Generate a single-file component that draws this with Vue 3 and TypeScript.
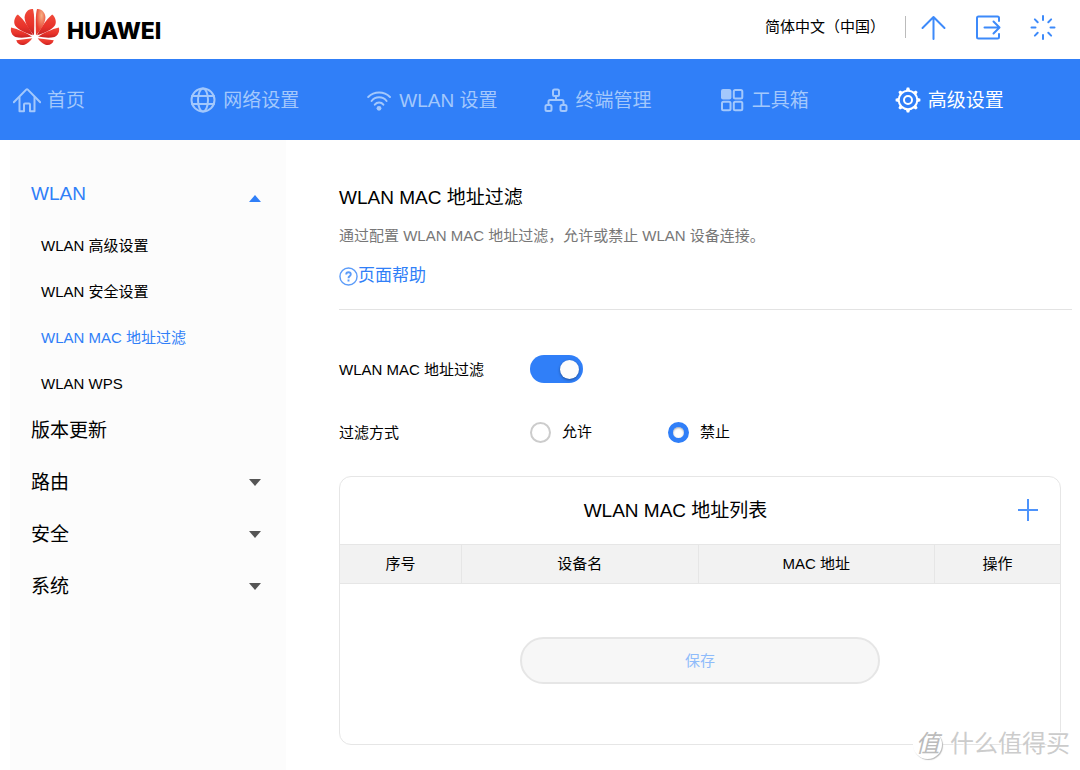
<script setup lang="ts">
import { ref } from 'vue'

type IconName = 'home' | 'globe' | 'wifi' | 'devices' | 'tools' | 'gear'

const tabs: { label: string; icon: IconName }[] = [
  { label: '首页', icon: 'home' },
  { label: '网络设置', icon: 'globe' },
  { label: 'WLAN 设置', icon: 'wifi' },
  { label: '终端管理', icon: 'devices' },
  { label: '工具箱', icon: 'tools' },
  { label: '高级设置', icon: 'gear' },
]
const activeTab = ref('高级设置')

const wlanPages = ['WLAN 高级设置', 'WLAN 安全设置', 'WLAN MAC 地址过滤', 'WLAN WPS']
const activePage = ref('WLAN MAC 地址过滤')
const wlanOpen = ref(true)
const sections = [
  { label: '版本更新', expandable: false },
  { label: '路由', expandable: true },
  { label: '安全', expandable: true },
  { label: '系统', expandable: true },
]

const filterOn = ref(true)
const mode = ref('deny')
const teeth = [0, 45, 90, 135, 180, 225, 270, 315]
</script>

<template>
  <div class="page">
    <header class="top">
      <a class="brand" href="#">
        <svg class="mark" viewBox="30 23 148 113" aria-hidden="true">
          <defs>
            <linearGradient id="petal" x1="0" y1="0" x2="0" y2="1">
              <stop offset="0" stop-color="#f04a3a" />
              <stop offset="0.6" stop-color="#e8322a" />
              <stop offset="1" stop-color="#c42222" />
            </linearGradient>
            <radialGradient id="glow" cx="0.4" cy="0.25" r="0.6">
              <stop offset="0" stop-color="#f6b184" />
              <stop offset="1" stop-color="#e93a2e" />
            </radialGradient>
            <g id="side">
              <path d="M98 104C88 84 72 58 53 42C43 50 39 64 45 75C53 88 78 98 98 104Z" />
              <path d="M95 108C78 97 54 86 33 81C30 92 35 104 46 109C60 113 78 111 95 108Z" />
              <path d="M96 113L48 119C52 130 62 136 73 132C83 128 90 122 96 113Z" />
            </g>
            <path id="centre" d="M101 104C102 76 103 44 98 26C84 24 73 37 73 52C74 70 88 90 101 104Z" />
          </defs>
          <g fill="url(#petal)">
            <use href="#side" />
            <use href="#centre" />
            <use href="#side" transform="translate(208) scale(-1 1)" />
          </g>
          <use href="#centre" fill="url(#glow)" transform="translate(208) scale(-1 1)" />
        </svg>
        <span class="wordmark">HUAWEI</span>
      </a>
      <div class="tools">
        <button class="lang" type="button">简体中文（中国）</button>
        <span class="bar"></span>
        <button class="tool" type="button" aria-label="更新">
          <svg viewBox="0 0 26 26"><path d="M13.5 25V3M2.5 14L13.5 3L24.5 14" /></svg>
        </button>
        <button class="tool" type="button" aria-label="退出">
          <svg viewBox="0 0 26 26"><path d="M24 7V4Q24 2.500 22.500 2.500H3.500Q2 2.500 2 4V23Q2 24.500 3.500 24.500H22.500Q24 24.500 24 23V20M9.500 13.500H24M18.500 7.500L24.500 13.500L18.500 19.500" /></svg>
        </button>
        <button class="tool" type="button" aria-label="状态">
          <svg viewBox="0 0 26 26">
            <path v-for="a in teeth" :key="a" d="M13 2V6" :transform="`rotate(${a} 13 13.500)`" />
          </svg>
        </button>
      </div>
    </header>

    <nav class="tabs">
      <a v-for="t in tabs" :key="t.label" href="#" class="tab" :class="{ active: t.label === activeTab }"
        @click.prevent="activeTab = t.label">
        <svg class="tab-icon" viewBox="0 0 28 28" aria-hidden="true">
          <g v-if="t.icon === 'home'">
            <path d="M0.800 16.200L13.200 3.600Q14 2.800 14.800 3.600L27.200 16.200" />
            <path d="M6.500 11.500V25.200H11V18.500Q11 17.500 12 17.500H16Q17 17.500 17 18.500V25.200H21.500V11.500" />
          </g>
          <g v-else-if="t.icon === 'globe'">
            <circle cx="14" cy="14" r="11.500" />
            <ellipse cx="14" cy="14" rx="5" ry="11.500" />
            <path d="M3 10H25M3 18H25" />
          </g>
          <g v-else-if="t.icon === 'wifi'">
            <path d="M3.200 11A15.500 15.500 0 0 1 25 11M6.600 15A9.500 9.500 0 0 1 21.600 15M9.800 18.600A5.500 5.500 0 0 1 18.400 18.600" />
            <circle class="solid" cx="14" cy="22.300" r="2.400" />
          </g>
          <g v-else-if="t.icon === 'devices'">
            <rect x="11" y="3.500" width="6" height="6.500" rx="1.500" />
            <rect x="3.500" y="19" width="6" height="6" rx="1.500" />
            <rect x="18.500" y="19" width="6" height="6" rx="1.500" />
            <path d="M14 10V14M6.500 19V15.500Q6.500 14 8 14H20Q21.500 14 21.500 15.500V19" />
          </g>
          <g v-else-if="t.icon === 'tools'">
            <rect class="solid" x="3" y="3" width="10.400" height="10.400" rx="2" />
            <rect x="15.800" y="4" width="8.500" height="8.500" rx="1.500" />
            <rect x="4" y="15.800" width="8.500" height="8.500" rx="1.500" />
            <rect x="15.800" y="15.800" width="8.500" height="8.500" rx="1.500" />
          </g>
          <g v-else>
            <circle cx="14" cy="14" r="9.300" />
            <circle cx="14" cy="14" r="4" />
            <path v-for="a in teeth" :key="a" class="tooth" d="M12.800 1.600H15.200L16.300 5H11.700Z" :transform="`rotate(${a} 14 14)`" />
          </g>
        </svg>
        <span>{{ t.label }}</span>
      </a>
    </nav>

    <div class="body">
      <aside class="side">
        <button type="button" class="section open" :aria-expanded="wlanOpen" @click="wlanOpen = !wlanOpen">
          <span>WLAN</span>
          <svg class="caret" viewBox="0 0 12 7"><path d="M0 7L6 0L12 7Z" /></svg>
        </button>
        <ul v-if="wlanOpen" class="sub">
          <li v-for="p in wlanPages" :key="p">
            <a href="#" :class="{ active: p === activePage }" @click.prevent="activePage = p">{{ p }}</a>
          </li>
        </ul>
        <button v-for="s in sections" :key="s.label" type="button" class="section">
          <span>{{ s.label }}</span>
          <svg v-if="s.expandable" class="caret" viewBox="0 0 12 7"><path d="M0 0L6 7L12 0Z" /></svg>
        </button>
      </aside>

      <main class="main">
        <div class="intro">
          <h1>WLAN MAC 地址过滤</h1>
          <p>通过配置 WLAN MAC 地址过滤，允许或禁止 WLAN 设备连接。</p>
          <a class="help" href="#">
            <svg viewBox="0 0 20 20" aria-hidden="true">
              <circle cx="10" cy="10" r="9" />
              <path class="query" d="M7.600 8Q7.600 5.600 10 5.600Q12.400 5.600 12.400 7.700Q12.400 9 11 9.800Q10 10.400 10 11.800M10 13.200V15.200" />
            </svg>
            <span>页面帮助</span>
          </a>
        </div>

        <div class="field">
          <label class="name" for="filter">WLAN MAC 地址过滤</label>
          <input id="filter" v-model="filterOn" class="switch" type="checkbox" role="switch" />
        </div>
        <div class="field" role="radiogroup" aria-labelledby="mode-name">
          <span id="mode-name" class="name">过滤方式</span>
          <label class="choice"><input v-model="mode" type="radio" name="mode" value="allow" />允许</label>
          <label class="choice"><input v-model="mode" type="radio" name="mode" value="deny" />禁止</label>
        </div>

        <section class="card">
          <div class="card-head">
            <h2>WLAN MAC 地址列表</h2>
            <button type="button" class="add" aria-label="添加">
              <svg viewBox="0 0 20 22"><path d="M10 0V22M0 11H20" /></svg>
            </button>
          </div>
          <table>
            <thead>
              <tr>
                <th class="index">序号</th>
                <th>设备名</th>
                <th>MAC 地址</th>
                <th class="action">操作</th>
              </tr>
            </thead>
          </table>
          <button type="button" class="save" disabled>保存</button>
        </section>
      </main>
    </div>

    <div class="stamp"><span class="seal">值</span><span>什么值得买</span></div>
  </div>
</template>

<style>
body {
  margin: 0;
  background: #fff;
}
</style>

<style scoped>
.page {
  position: relative;
  display: flex;
  flex-direction: column;
  min-height: 100vh;
  font-family: "Liberation Sans", "Noto Sans CJK SC", sans-serif;
  font-size: 15px;
  line-height: 24px;
  color: #000;
}

button {
  padding: 0;
  border: 0;
  background: none;
  font: inherit;
  color: inherit;
  cursor: pointer;
}

a {
  color: inherit;
  text-decoration: none;
}

svg {
  display: block;
  flex: none;
}

.top {
  display: flex;
  align-items: center;
  justify-content: space-between;
  height: 59px;
  padding: 0 24px 0 10px;
  box-sizing: border-box;
}

.brand {
  display: flex;
  align-items: center;
  gap: 7px;
  padding-bottom: 5px;
}

.mark {
  width: 50px;
  height: 38px;
}

.wordmark {
  padding-top: 8px;
  font-family: Inter, "Liberation Sans", sans-serif;
  font-size: 23px;
  font-weight: 800;
}

.tools {
  display: flex;
  align-items: center;
  padding-bottom: 5px;
}

.bar {
  width: 1px;
  height: 22px;
  margin: 0 14px 0 20px;
  background: #bbb;
}

.tool + .tool {
  margin-left: 29px;
}

.tool svg {
  width: 26px;
  height: 26px;
  fill: none;
  stroke: #3d8afa;
  stroke-width: 2;
  stroke-linecap: round;
  stroke-linejoin: round;
}

.tabs {
  display: grid;
  grid-template-columns: repeat(6, 1fr);
  height: 81px;
  padding: 0 10px 0 13px;
  background: #307ff8;
  font-size: 19px;
}

.tab {
  display: flex;
  align-items: center;
  gap: 6px;
  color: #a3c8fc;
  white-space: nowrap;
}

.tab span {
  padding-top: 2px;
}

.tab.active {
  color: #fff;
}

.tab-icon {
  width: 28px;
  height: 28px;
  fill: none;
  stroke: currentColor;
  stroke-width: 2;
  stroke-linejoin: round;
  stroke-linecap: round;
}

.tab-icon .solid,
.tab-icon .tooth {
  fill: currentColor;
  stroke: none;
}

.body {
  display: flex;
  flex: 1;
}

.side {
  flex: none;
  width: 276px;
  margin-left: 10px;
  padding: 28px 25px 0 21px;
  box-sizing: border-box;
  background: #fcfcfc;
}

.section {
  display: flex;
  align-items: center;
  justify-content: space-between;
  width: 100%;
  height: 52px;
  font-size: 19px;
}

.section.open {
  color: #307ff8;
}

.caret {
  width: 12px;
  height: 7px;
  margin-bottom: 2px;
  fill: #555;
}

.open .caret {
  margin: 8px 0 0;
  fill: #307ff8;
}

.sub {
  margin: 0 0 -2px;
  padding: 3px 0 0 10px;
  list-style: none;
}

.sub a {
  display: block;
  line-height: 46px;
}

.sub .active {
  color: #307ff8;
}

.main {
  flex: 1;
  min-width: 0;
  padding: 43px 8px 24px 53px;
}

.intro {
  padding-bottom: 16px;
  border-bottom: 1px solid #e3e3e3;
}

h1,
h2 {
  margin: 0;
  font-size: 19px;
  font-weight: 400;
  line-height: 30px;
}

p {
  margin: 11px 0 16px;
  color: #777;
}

.help {
  display: inline-flex;
  align-items: center;
  font-size: 17px;
  color: #307ff8;
}

.help svg {
  width: 19px;
  height: 19px;
  fill: none;
  stroke: #5c9cf9;
  stroke-width: 1.5;
}

.help .query {
  stroke-width: 2;
}

.field {
  display: flex;
  align-items: center;
  height: 63px;
}

.intro + .field {
  padding-top: 28px;
}

.name {
  width: 191px;
  padding-top: 2px;
}

.switch {
  display: flex;
  align-items: center;
  justify-content: flex-end;
  appearance: none;
  width: 53px;
  height: 28px;
  margin: 0;
  padding: 0 4px;
  box-sizing: border-box;
  border-radius: 14px;
  background: #ccc;
  cursor: pointer;
}

.switch:checked {
  background: #307ff8;
}

.switch:not(:checked) {
  justify-content: flex-start;
}

.switch::before {
  content: "";
  width: 19px;
  height: 19px;
  border-radius: 50%;
  background: #fcfcfc;
  box-shadow: 0 1px 3px rgba(0, 0, 0, 0.4);
}

.choice {
  display: flex;
  align-items: center;
  gap: 11px;
  width: 138px;
}

.choice input {
  appearance: none;
  width: 21px;
  height: 21px;
  margin: 0;
  box-sizing: border-box;
  border: 2px solid #ccc;
  border-radius: 50%;
  background: #fff;
}

.choice input:checked {
  border: 5px solid #307ff8;
  box-shadow: inset 0 1px 2px rgba(0, 0, 0, 0.35);
}

.card {
  margin: 12px 11px 0 0;
  padding-bottom: 60px;
  border: 1px solid #e6e6e6;
  border-radius: 12px;
}

.card-head {
  display: flex;
  align-items: center;
  height: 67px;
  padding-right: 22px;
}

h2 {
  flex: 1;
  padding-top: 2px;
  text-align: center;
}

.add {
  margin-left: 7px;
}

.add svg {
  width: 20px;
  height: 22px;
  fill: none;
  stroke: #4d93fb;
  stroke-width: 2;
}

table {
  width: 100%;
  border-collapse: collapse;
  table-layout: fixed;
}

th {
  height: 38px;
  padding: 0;
  border: 1px solid #e6e6e6;
  border-width: 1px 0 1px 1px;
  background: #f2f2f2;
  font-weight: 400;
}

th:first-child {
  border-left: 0;
}

.index {
  width: 121px;
}

.action {
  width: 125px;
}

.save {
  display: block;
  width: 50%;
  height: 47px;
  margin: 53px auto 0;
  padding-top: 2px;
  border: 2px solid #e6e6e6;
  border-radius: 24px;
  background: #f7f7f7;
  color: #8fbcfb;
}

.stamp {
  position: absolute;
  right: 10px;
  bottom: 8px;
  display: flex;
  align-items: center;
  gap: 8px;
  font-size: 24px;
  line-height: 36px;
  color: #ccc;
  text-shadow: -1px -1px 0 #fff;
  pointer-events: none;
}

.seal {
  display: flex;
  align-items: center;
  justify-content: center;
  width: 29px;
  height: 29px;
  border-radius: 50%;
  background: #fff;
  box-shadow: 1px 1px 1px #bbb;
  color: #bbb;
  font-style: italic;
}
</style>
